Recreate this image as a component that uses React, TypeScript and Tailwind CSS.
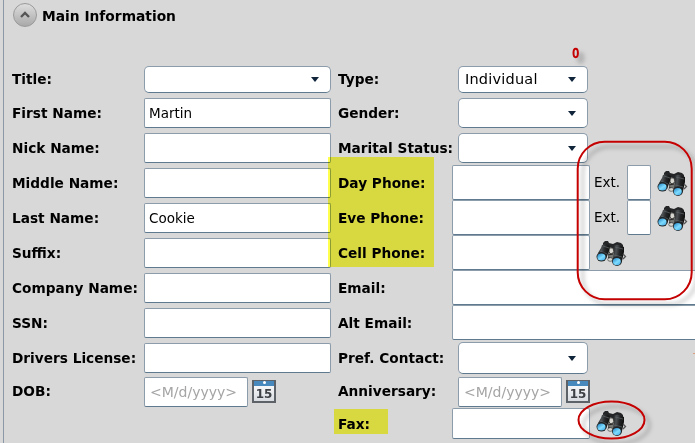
import React from "react";

const box = "shrink-0 bg-white border border-[#8c9cab] border-b-[#5f7a8e] rounded-[2px]";

function Label({ children }: { children: string }) {
  return <span className="-mt-px self-center whitespace-pre text-[13.7px] leading-[18px] font-bold">{children}</span>;
}

function Input({ size, value }: { size: string; value?: string }) {
  return <div className={`${box} ${size} flex items-center pl-[4px] text-[13.5px]`}>{value}</div>;
}

function Select({ size, value }: { size: string; value?: string }) {
  return (
    <div className={`${box} ${size} flex items-center justify-between rounded-[5px] pl-[6px] pr-[11px] text-[14.5px] tracking-[0.2px]`}>
      <span className="-mt-px leading-[18px]">{value}</span>
      <svg width="8" height="5" viewBox="0 0 8 5"><path d="M0 0H8L4 5Z" fill="#10243a" /></svg>
    </div>
  );
}

function DateField() {
  return (
    <>
      <div className={`${box} mt-[2px] h-[30px] w-[104px] flex items-center pl-[5px] text-[14px] text-[#a5a5a5]`}>&lt;M/d/yyyy&gt;</div>
      <div className="ml-1 mt-[5px] flex h-[23px] w-6 shrink-0 flex-col border-2 border-t border-[#5d6168] bg-linear-to-b from-white to-[#d9dde2]">
        <div className="flex h-[5px] shrink-0 justify-center bg-[#4788bd]"><i className="h-[3px] w-[3px] rounded-full bg-white" /></div>
        <span className="text-center text-[12px] leading-[16px] font-semibold text-[#3e4145] [font-family:'DejaVu_Sans',sans-serif]">15</span>
      </div>
    </>
  );
}

function Binoculars({ place }: { place: string }) {
  return (
    <svg className={`shrink-0 ${place}`} width="31" height="27" viewBox="0 0 31 27">
      <defs>
        <linearGradient id="barrel" x1="0" x2="1" y2=".2"><stop stopColor="#1c1d1e" /><stop offset=".35" stopColor="#4c5053" /><stop offset=".65" stopColor="#232425" /><stop offset="1" stopColor="#111" /></linearGradient>
        <linearGradient id="lens" x1="0" x2=".8" y2="1"><stop stopColor="#1c7fc0" /><stop offset=".6" stopColor="#7fdcff" /><stop offset="1" stopColor="#48aee6" /></linearGradient>
      </defs>
      <path d="M12 7L19 7 18 19 12 19Z" fill="#777774" />
      <path d="M13 8H17L18 12 15 14 13 12Z" fill="#d6d5cf" stroke="#303030" strokeWidth=".8" />
      <path d="M12 15L17 14M12 17L17 19" stroke="#262626" strokeWidth="1.1" />
      <ellipse cx="14.3" cy="19.5" rx="2.6" ry="1.8" fill="#d7d7d0" stroke="#555" strokeWidth=".8" />
      <path d="M7 6L7 3 9 1 12 1 13 3 17 4 21 2 25 3 27 5 27 9 19 9 14 7Z" fill="#242526" />
      <path d="M6 5Q10 3 14 6L13 11 10 19 2 13 5 8Z" fill="url(#barrel)" />
      <path d="M17 6Q21 3 28 7L28 12 26 21 17 19 18 12Z" fill="url(#barrel)" />
      <path d="M7 6L13 8M19 7L27 9M4 11L11 14M18 15L26 17" stroke="#62676a" strokeWidth=".7" />
      <path d="M27 14L29.5 16.5 27 19" fill="none" stroke="#555" strokeWidth="1.3" />
      <ellipse cx="5.5" cy="16.8" rx="5" ry="4.8" fill="#202426" />
      <ellipse cx="5.4" cy="17" rx="4.1" ry="3.6" fill="url(#lens)" />
      <ellipse cx="21" cy="21.2" rx="5" ry="4.8" fill="#202426" />
      <ellipse cx="20.8" cy="21.6" rx="4" ry="3.7" fill="url(#lens)" />
    </svg>
  );
}

function Row({ h, label, cols, children }: { h: string; label: string; cols: string; children?: React.ReactNode }) {
  return (
    <div className={`grid ${cols} ${h}`}>
      <Label>{label}</Label>
      <div className="flex items-start">{children}</div>
    </div>
  );
}

const L = "grid-cols-[132px_1fr]";
const R = "grid-cols-[114px_1fr]";
const text = "mt-[2px] h-[30px] w-[187px]";
const phone = "-mt-px h-[35px] w-[138px]";

function Extension() {
  return (
    <>
      <span className="ml-[4px] mt-[7px] w-[33px] text-[13.5px] leading-[18px]">Ext.</span>
      <Input size="-mt-px h-[35px] w-[24px]" />
      <Binoculars place="ml-[6px] mt-[4px]" />
    </>
  );
}

export default function App() {
  return (
    <div className="relative h-[443px] w-[695px] overflow-hidden bg-[#d8d8d8] pl-[3px] text-black [font-family:'DejaVu_Sans',Verdana,sans-serif]">
      <div className="h-full border-l border-[#8b98a5]">
        <header className="flex h-[63px] items-start pl-[9px] pt-[3px]">
          <div className="flex h-6 w-6 items-center justify-center rounded-full border border-[#9a9a9a] bg-linear-to-b from-[#dedede] to-[#a9a9a9]">
            <svg width="12" height="8" viewBox="0 0 12 8"><path d="M2 6L6 2 10 6" fill="none" stroke="#555" strokeWidth="2.3" /></svg>
          </div>
          <h1 className="ml-[5px] mt-[4px] text-[13.8px] leading-[18px] font-bold whitespace-nowrap">Main Information</h1>
        </header>
        <main className="flex pl-2">
          <section className="w-[326px] shrink-0">
            <Row cols={L} h="h-[33px]" label="Title:"><Select size="mt-[3px] h-[27px] w-[187px]" /></Row>
            <Row cols={L} h="h-[35px]" label="First Name:"><Input size={text} value="Martin" /></Row>
            <Row cols={L} h="h-[35px]" label="Nick Name:"><Input size={text} /></Row>
            <Row cols={L} h="h-[35px]" label="Middle Name:"><Input size={text} /></Row>
            <Row cols={L} h="h-[35px]" label="Last Name:"><Input size={text} value="Cookie" /></Row>
            <Row cols={L} h="h-[35px]" label="Suffix:"><Input size={text} /></Row>
            <Row cols={L} h="h-[35px]" label="Company Name:"><Input size={text} /></Row>
            <Row cols={L} h="h-[35px]" label="SSN:"><Input size={text} /></Row>
            <Row cols={L} h="h-[34px]" label="Drivers License:"><Input size={text} /></Row>
            <Row cols={L} h="h-[33px]" label="DOB:"><DateField /></Row>
          </section>
          <section className="w-[357px] shrink-0">
            <Row cols={R} h="h-[33px]" label="Type:"><Select size="ml-[6px] mt-[3px] h-[27px] w-[130px]" value="Individual" /></Row>
            <Row cols={R} h="h-[35px]" label="Gender:"><Select size="ml-[6px] mt-[2px] h-[30px] w-[130px]" /></Row>
            <Row cols={R} h="h-[35px]" label="Marital Status:"><Select size="ml-[6px] mt-[2px] h-[30px] w-[130px]" /></Row>
            <Row cols={R} h="h-[35px]" label="Day Phone:"><Input size={phone} /><Extension /></Row>
            <Row cols={R} h="h-[35px]" label="Eve Phone:"><Input size={phone} /><Extension /></Row>
            <Row cols={R} h="h-[35px]" label="Cell Phone:"><Input size={phone} /><Binoculars place="ml-[6px] mt-[4px]" /></Row>
            <Row cols={R} h="h-[35px]" label="Email:"><Input size="-mt-px h-[35px] w-[260px]" /></Row>
            <Row cols={R} h="h-[35px]" label="Alt Email:"><Input size="-mt-px h-[35px] w-[260px]" /></Row>
            <Row cols={R} h="h-[34px]" label="Pref. Contact:"><Select size="ml-[6px] mt-px h-[32px] w-[130px]" /></Row>
            <Row cols={R} h="h-[33px]" label="Anniversary:"><div className="ml-[6px] flex"><DateField /></div></Row>
            <Row cols={R} h="h-[32px]" label="Fax:"><Input size="h-[31px] w-[138px]" /><Binoculars place="ml-[6px] mt-[2px]" /></Row>
          </section>
        </main>
      </div>
      <div className="absolute left-[328px] top-[157px] h-[110px] w-[106px] bg-[#ffff4d] mix-blend-multiply" />
      <div className="absolute left-[334px] top-[409px] h-[25px] w-[54px] bg-[#ffff4d] mix-blend-multiply" />
      <svg className="absolute inset-0" width="695" height="443" viewBox="0 0 695 443" fill="none" stroke="#c40000" strokeWidth="2">
        <defs><filter id="shade" x="-50%" y="-50%" width="250%" height="250%"><feDropShadow dx="5" dy="5" stdDeviation="2" floodColor="#000" floodOpacity=".3" /></filter></defs>
        <g filter="url(#shade)">
          <rect x="577.7" y="141.7" width="114" height="157.6" rx="27" />
          <ellipse cx="575.7" cy="53" rx="2.2" ry="4.2" />
          <ellipse cx="611.5" cy="420" rx="33" ry="18.5" />
        </g>
        <path d="M693 353.5H695" stroke="#d8a080" strokeWidth="1" />
      </svg>
    </div>
  );
}
